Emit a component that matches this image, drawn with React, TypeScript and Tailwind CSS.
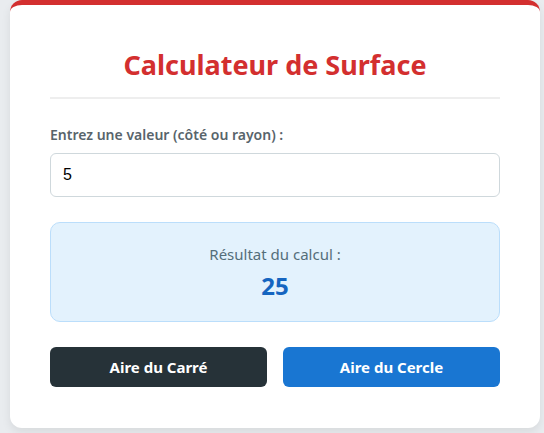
export default function App() {
  return (
    <div className="min-h-screen bg-[#e9ecef] pl-[10px] pr-[4px] pb-[5px]" style={{ fontFamily: '"Noto Sans", "Open Sans", sans-serif' }}>
      <div className="h-[428px] w-[530px] rounded-[12px] border-t-[5px] border-[#d32f2f] bg-white px-[40px] pt-[42px] shadow-[0_4px_10px_rgba(0,0,0,0.08)]">
        <h1 className="border-b-2 border-[#eeeeee] pb-[14px] text-center text-[27px] leading-[36px] font-bold text-[#d32f2f]">
          Calculateur de Surface
        </h1>
        <label className="mt-[26px] block text-[14px] leading-[20px] font-semibold text-[#58646b]">
          Entrez une valeur (côté ou rayon) :
        </label>
        <input
          type="number"
          defaultValue="5"
          className="mt-[8px] block h-[44px] w-full rounded-[6px] border border-[#cfd8dc] px-[12px] text-[16px] text-black outline-none"
          style={{ fontFamily: '"Liberation Sans", Arial, sans-serif' }}
        />
        <div className="mt-[25px] flex h-[100px] flex-col items-center justify-center rounded-[10px] border border-[#bbdefb] bg-[#e3f2fd]">
          <p className="text-[15px] leading-[22px] text-[#546e7a]">Résultat du calcul :</p>
          <p className="mt-[6px] text-[24px] leading-[30px] font-bold text-[#1565c0]">25</p>
        </div>
        <div className="mt-[25px] flex gap-[16px]">
          <button className="h-[40px] flex-1 rounded-[6px] bg-[#263238] text-[15px] font-bold text-white">
            Aire du Carré
          </button>
          <button className="h-[40px] flex-1 rounded-[6px] bg-[#1976d2] text-[15px] font-bold text-white">
            Aire du Cercle
          </button>
        </div>
      </div>
    </div>
  );
}
